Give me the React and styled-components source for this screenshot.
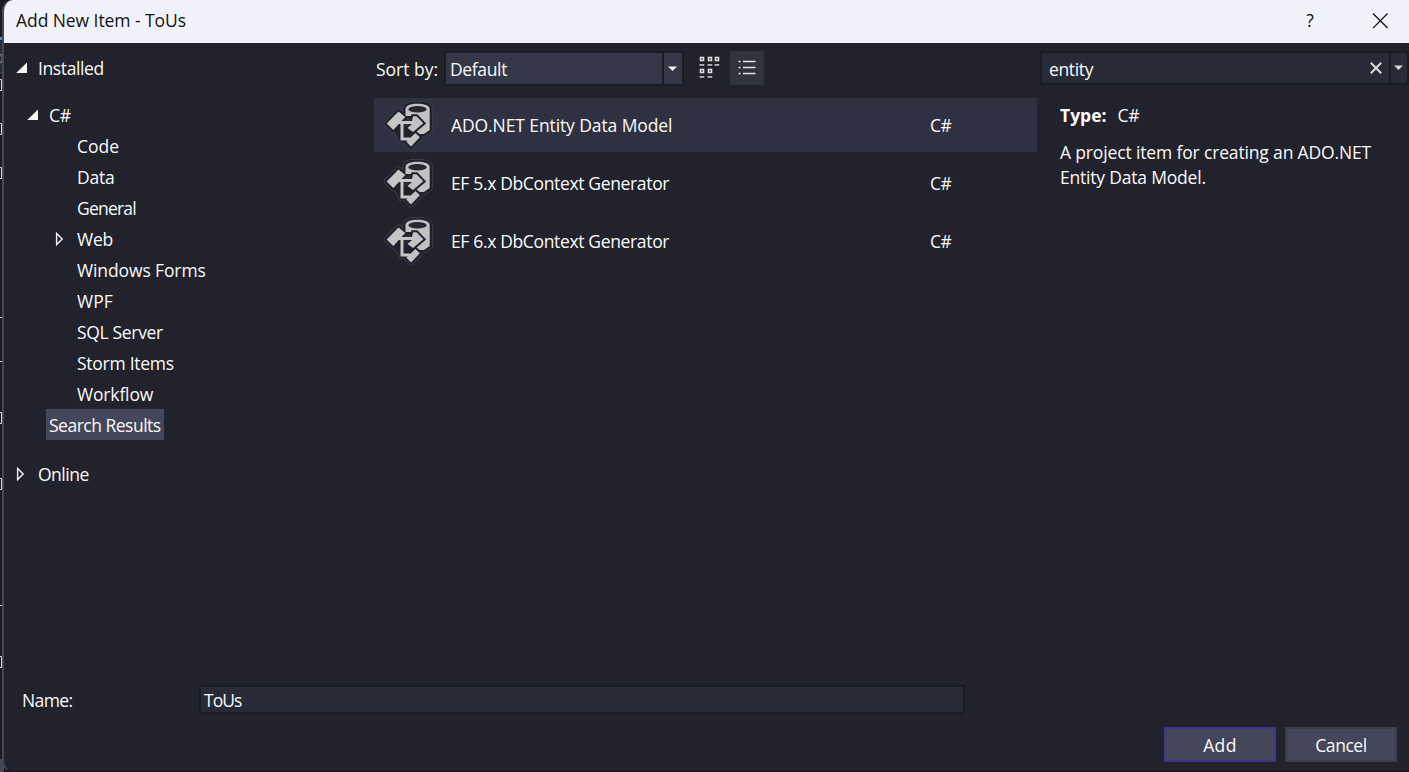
import React from 'react';
import styled, { createGlobalStyle, css } from 'styled-components';

const Global = createGlobalStyle`
  * { box-sizing: border-box; }
  html, body { margin: 0; background: #1b1b22; overflow: hidden; }
  body {
    font-family: "Open Sans", "Segoe UI", sans-serif;
    font-size: 17.5px;
    line-height: 25px;
    color: #fafafa;
  }
`;

const Screen = styled.div`
  display: flex;
  width: 1409px;
  height: 772px;
  background: #1b1b22;
`;
const EditorEdge = styled.svg`
  flex: none;
  width: 4px;
  height: 772px;
  margin-right: -4px;
`;
const Dialog = styled.div`
  display: flex;
  flex-direction: column;
  width: 1407px;
  height: 772px;
  margin-left: 2px;
  border-left: 2px solid #48484e;
  border-bottom: 1px solid #1a1521;
  border-radius: 11px 0 0 11px;
  overflow: hidden;
  background: #22222c;
`;
const TitleBar = styled.header`
  display: flex;
  align-items: center;
  height: 43px;
  padding: 0 21px 2px 12px;
  background: #f1f2f9;
  color: #111;
`;
const Spacer = styled.div`
  flex: 1;
`;
const Label = styled.span`
  white-space: pre;
  letter-spacing: ${(p) => p.$track || 0}px;
  font-weight: ${(p) => (p.$bold ? 700 : 400)};
`;
const HelpMark = styled.span`
  width: 12px;
  margin-right: 56px;
  text-align: center;
`;
const Icon = styled.svg`
  flex: none;
  display: block;
`;

const Main = styled.div`
  display: grid;
  grid-template-columns: 370px 663px 1fr;
  height: 634px;
`;

const Tree = styled.nav`
  padding-top: 10px;
`;
const TreeRow = styled.div`
  display: flex;
  align-items: center;
  height: 31px;
  padding-left: ${(p) => p.$indent}px;
  margin-top: ${(p) => p.$gap || 0}px;
`;
const Expander = styled.span`
  display: flex;
  width: 22px;
  height: 14px;
  margin-bottom: ${(p) => (p.$raised ? 2 : 0)}px;
`;
const Highlight = styled.span`
  display: flex;
  align-items: center;
  width: 118px;
  height: 31px;
  margin-bottom: 2px;
  padding: 2px 0 0 3px;
  background: #44475a;
`;

const ListPane = styled.section`
  display: flex;
  flex-direction: column;
`;
const Toolbar = styled.div`
  display: flex;
  align-items: center;
  height: 55px;
  padding: 0 0 5px 2px;
`;
const SortLabel = styled.div`
  flex: none;
  width: 63px;
  padding-top: 2px;
`;
const Combo = styled.div`
  display: flex;
  width: 240px;
  height: 35px;
  margin-left: 5px;
  margin-top: 1px;
  border: 2px solid #1b1b24;
  background: #343746;
`;
const ComboValue = styled.div`
  flex: 1;
  display: flex;
  align-items: center;
  padding: 1px 0 0 4px;
`;
const DropButton = styled.div`
  display: flex;
  align-items: center;
  justify-content: center;
  width: ${(p) => p.$width}px;
  padding-right: 1px;
  border-left: 2px solid #1b1b24;
`;
const ViewButton = styled.div`
  display: flex;
  align-items: center;
  justify-content: center;
  width: 34px;
  height: 34px;
  margin-left: ${(p) => p.$gap}px;
  ${(p) => p.$on && css`
    padding-right: 1px;
    background: #32343c;
  `}
`;
const ItemRow = styled.div`
  display: flex;
  align-items: center;
  height: 54px;
  margin-bottom: 4px;
  padding-left: 10px;
  ${(p) => p.$selected && css`background: #303140;`}
`;
const ItemName = styled.div`
  width: 494px;
  padding-left: 15px;
`;

const DetailPane = styled.aside`
  padding-left: 3px;
`;
const SearchBox = styled.div`
  display: flex;
  width: 369px;
  height: 34px;
  margin-top: 8px;
  border: 2px solid #1b1b24;
  background: #282a36;
`;
const SearchText = styled.div`
  flex: 1;
  display: flex;
  align-items: flex-start;
  justify-content: space-between;
  padding: 4px 7px 0 7px;
`;
const ClearMark = styled.span`
  display: flex;
  padding-top: 5px;
`;
const TypeLine = styled.div`
  display: flex;
  gap: 11px;
  margin: 18px 0 0 20px;
`;
const Description = styled.div`
  display: flex;
  flex-direction: column;
  margin: 12px 0 0 20px;
`;

const NameRow = styled.div`
  display: flex;
  align-items: center;
  height: 46px;
  padding-left: 18px;
`;
const NameLabel = styled.div`
  width: 177px;
`;
const NameInput = styled.div`
  display: flex;
  align-items: center;
  width: 766px;
  height: 29px;
  margin-bottom: 2px;
  padding: 2px 0 0 3px;
  border: 2px solid #1b1b24;
  background: #282a36;
`;
const Actions = styled.footer`
  display: flex;
  justify-content: flex-end;
  gap: 9px;
  padding: 4px 12px 0 0;
`;
const Button = styled.div`
  display: flex;
  align-items: center;
  justify-content: center;
  width: 112px;
  height: 35px;
  padding-top: 2px;
  border: 2px solid ${(p) => (p.$primary ? '#413486' : '#3e3e42')};
  background: #44475a;
`;

const Open = () => (
  <Icon width="12" height="12" viewBox="0 0 12 12">
    <path d="M11 0.5V11H0.2Z" fill="#f6f6f2" />
  </Icon>
);
const Closed = () => (
  <Icon width="9" height="14" viewBox="0 0 9 14">
    <path d="M1.6 1.4V12.6L7.2 7Z" fill="none" stroke="#f1f1f1" strokeWidth="1.4" />
  </Icon>
);
const Arrow = ({ color = '#f4f4f4' }) => (
  <Icon width="10" height="6" viewBox="0 0 10 6">
    <path d="M0 0.5H9L4.5 5Z" fill={color} />
  </Icon>
);

const tiles = [[0, 0], [8, 0], [15, 0], [0, 12], [8, 12]];
const GridIcon = () => (
  <Icon width="22" height="24" viewBox="0 0 22 24">
    {tiles.map(([x, y]) => (
      <g key={`${x}-${y}`}>
        <rect x={x + 1.5} y={y + 1.5} width="3" height="3" fill="#22222c" stroke="#dcdcdc" strokeWidth="1.6" />
        <rect x={x + 0.5} y={y + 8.2} width="4.8" height="1.4" fill="#dcdcdc" />
      </g>
    ))}
  </Icon>
);
const ListIcon = () => (
  <Icon width="18" height="16" viewBox="0 0 18 16">
    {[1, 7, 13].map((y) => (
      <path key={y} d={`M0.5 ${y + 0.5}H2.5M5 ${y + 0.5}H17.5`} stroke="#e4e4e4" strokeWidth="1.4" />
    ))}
  </Icon>
);

const cylinder = 'M21.5 11C21.5 7.5 27 5.8 33.5 5.8S45.7 7.5 45.7 11V32L40 36H36L29 34V18H21.5Z';
const diamond = 'M14.5 13.5L21.3 19L9.3 32L2.7 25.6Z';
const upperHead = 'M29 18.2H32.5L39.3 25.3L29 34L23.5 30L28 26V23Z';
const lowerHead = 'M22.3 43.5L31.5 35L35.8 39.3L27 48.5Z';
const connector = 'M13 24.6H31M18 24.6V41H26';
const ModelIcon = () => (
  <Icon width="52" height="54" viewBox="0 0 52 54">
    {[['#43444e', 6.2], ['#20212b', 4.8]].map(([color, width]) => (
      <g key={color} fill={color} stroke={color} strokeWidth={width} strokeLinejoin="round">
        <path d={cylinder} />
        <path d={diamond} />
        <path d={upperHead} />
        <path d={lowerHead} />
        <path d="M11 31H26V42H17V40Z" />
      </g>
    ))}
    <path d={cylinder} fill="#c2c2c2" />
    <ellipse cx="33.5" cy="11.2" rx="9.2" ry="3.2" fill="#262731" />
    <g fill="#c2c2c2" stroke="#22232d" strokeWidth="4" paintOrder="stroke">
      <path d={lowerHead} />
      <path d={upperHead} />
    </g>
    <path d={diamond} fill="#c6c6c6" />
    <path d={connector} fill="none" stroke="#c6c6c6" strokeWidth="3" />
  </Icon>
);

const branches = [
  ['Code', 0], ['Data', -0.2], ['General', -0.78], ['Web', -0.2, true], ['Windows Forms', -0.12],
  ['WPF', 0], ['SQL Server', -0.33], ['Storm Items', -0.27], ['Workflow', -0.16],
];
const items = [
  ['ADO.NET Entity Data Model', -0.1],
  ['EF 5.x DbContext Generator', -0.35],
  ['EF 6.x DbContext Generator', -0.35],
];

export default function App() {
  return (
    <Screen>
      <Global />
      <EditorEdge viewBox="0 0 4 772">
        <path d="M0 38.5H4" stroke="#4a8fd0" strokeWidth="3" />
        <path d="M0 41H4V70H0Z" fill="#292d3c" />
        <path d="M0 54Q2.5 55 2.5 58.5T0 63" fill="none" stroke="#93aabd" />
        <path d="M0 72.5H4" stroke="#3e3e44" strokeWidth="2" />
        {[79, 123, 167, 412, 478, 656].map((y) => (
          <path key={y} d={`M0 ${y + 0.5}H1.5V${y + 11.5}H0`} fill="none" stroke="#dadada" />
        ))}
        {[317, 361, 605].map((y) => (
          <path key={y} d={`M0 ${y + 0.5}H2`} stroke="#dadada" />
        ))}
        <path d="M0 759H4V772H0Z" fill="#44475a" />
      </EditorEdge>
      <Dialog>
        <TitleBar>
          <Label $track={-0.07}>Add New Item - ToUs</Label>
          <Spacer />
          <HelpMark>?</HelpMark>
          <Icon width="16" height="16" viewBox="0 0 16 16">
            <path d="M1 0.5L15.6 15.1M15.6 0.5L1 15.1" stroke="#111" strokeWidth="1.3" />
          </Icon>
        </TitleBar>
        <Main>
          <Tree>
            <TreeRow $indent={12}>
              <Expander><Open /></Expander>
              <Label $track={-0.38}>Installed</Label>
            </TreeRow>
            <TreeRow $indent={23} $gap={16}>
              <Expander><Open /></Expander>
              <Label $track={-0.3}>C#</Label>
            </TreeRow>
            {branches.map(([name, track, closed]) => (
              <TreeRow key={name} $indent={closed ? 51 : 73}>
                {closed && <Expander $raised><Closed /></Expander>}
                <Label $track={track}>{name}</Label>
              </TreeRow>
            ))}
            <TreeRow $indent={42}>
              <Highlight><Label $track={-0.5}>Search Results</Label></Highlight>
            </TreeRow>
            <TreeRow $indent={12} $gap={18}>
              <Expander $raised><Closed /></Expander>
              <Label $track={-0.5}>Online</Label>
            </TreeRow>
          </Tree>
          <ListPane>
            <Toolbar>
              <SortLabel><Label $track={0}>Sort by:</Label></SortLabel>
              <Combo>
                <ComboValue><Label $track={-0.35}>Default</Label></ComboValue>
                <DropButton $width={20}><Arrow /></DropButton>
              </Combo>
              <ViewButton $gap={9}><GridIcon /></ViewButton>
              <ViewButton $gap={3} $on><ListIcon /></ViewButton>
            </Toolbar>
            {items.map(([name, track], i) => (
              <ItemRow key={name} $selected={i === 0}>
                <ModelIcon />
                <ItemName><Label $track={track}>{name}</Label></ItemName>
                <Label $track={-0.5}>C#</Label>
              </ItemRow>
            ))}
          </ListPane>
          <DetailPane>
            <SearchBox>
              <SearchText>
                <Label $track={-0.35}>entity</Label>
                <ClearMark>
                  <Icon width="12" height="12" viewBox="0 0 12 12">
                    <path d="M0.8 0.8L11.2 11.2M11.2 0.8L0.8 11.2" stroke="#dcdcdc" strokeWidth="2" />
                  </Icon>
                </ClearMark>
              </SearchText>
              <DropButton $width={18}><Arrow color="#dcdcdc" /></DropButton>
            </SearchBox>
            <TypeLine>
              <Label $bold>Type:</Label>
              <Label $track={-0.3}>C#</Label>
            </TypeLine>
            <Description>
              <Label $track={-0.15}>A project item for creating an ADO.NET</Label>
              <Label $track={-0.2}>Entity Data Model.</Label>
            </Description>
          </DetailPane>
        </Main>
        <NameRow>
          <NameLabel><Label $track={-0.6}>Name:</Label></NameLabel>
          <NameInput><Label $track={-0.95}>ToUs</Label></NameInput>
        </NameRow>
        <Actions>
          <Button $primary><Label $track={0.4}>Add</Label></Button>
          <Button><Label $track={-0.45}>Cancel</Label></Button>
        </Actions>
      </Dialog>
    </Screen>
  );
}
